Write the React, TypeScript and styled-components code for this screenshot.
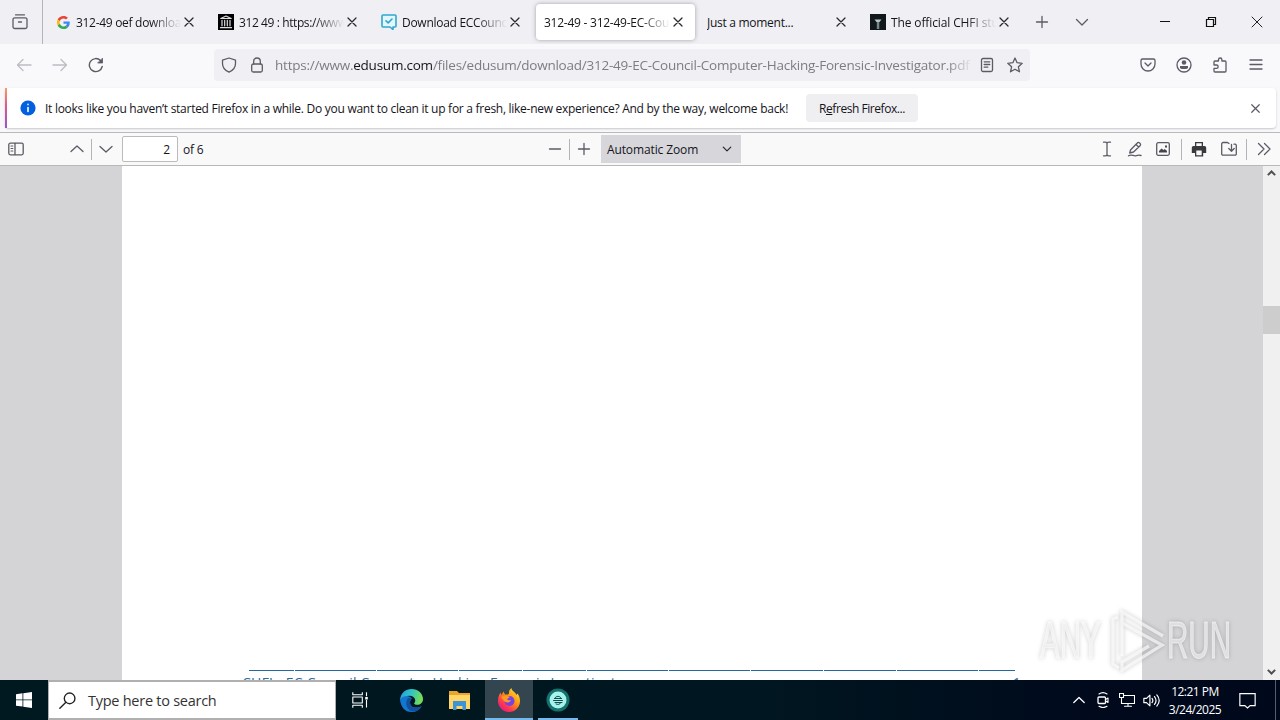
import React from "react";
import styled, { createGlobalStyle } from "styled-components";

const GlobalStyle = createGlobalStyle`
  * { box-sizing: border-box; }
  body { margin: 0; overflow: hidden; font-family: "Open Sans", "Noto Sans", sans-serif; font-size: 12px; color: #15141a; }
`;

const Screen = styled.div`
  position: relative;
  display: flex;
  flex-direction: column;
  width: 1280px;
  height: 720px;
  overflow: hidden;
  background: #f8f8fa;
`;

const Svg = styled.svg<{ $size: number; $color: string }>`
  display: block;
  flex: none;
  width: ${(p) => p.$size}px;
  height: ${(p) => p.$size}px;
  fill: none;
  stroke: ${(p) => p.$color};
  stroke-width: 1.3;
  stroke-linecap: round;
  stroke-linejoin: round;
`;

type IconProps = { children: React.ReactNode; size?: number; color?: string; box?: number };
const Icon = ({ children, size = 16, color = "#5b5b66", box = 16 }: IconProps) => (
  <Svg viewBox={`0 0 ${box} ${box}`} $size={size} $color={color}>{children}</Svg>
);

const Label = styled.span<{ $spacing?: number; $size?: number; $color?: string }>`
  display: block;
  white-space: nowrap;
  font-size: ${(p) => p.$size ?? 12}px;
  letter-spacing: ${(p) => p.$spacing ?? 0}px;
  color: ${(p) => p.$color ?? "#15141a"};
`;

const Cell = styled.div<{ $w: number; $start?: boolean }>`
  display: flex;
  flex: none;
  align-items: center;
  justify-content: ${(p) => (p.$start ? "flex-start" : "center")};
  width: ${(p) => p.$w}px;
  height: 100%;
`;

const Spacer = styled.div`flex: 1;`;

/* Tab strip */
const TabStrip = styled.div`
  display: flex;
  flex: none;
  align-items: center;
  height: 44px;
  background: #f0f0f4;
`;
const ViewButton = styled.div`
  display: flex;
  align-items: center;
  justify-content: center;
  width: 43px;
  height: 44px;
  padding-right: 2px;
  margin-right: 2px;
  border-right: 1px solid #b4b4ba;
`;
const Tab = styled.div<{ $active?: boolean }>`
  display: flex;
  flex: none;
  align-items: center;
  width: 159px;
  height: 36px;
  margin: 0 2px;
  padding: 0 9px 0 8px;
  border-radius: 4px;
  background: ${(p) => (p.$active ? "#fff" : "transparent")};
  box-shadow: ${(p) => (p.$active ? "0 0 4px rgba(90,90,105,.55)" : "none")};
`;
const TabTitle = styled.div<{ $fade?: boolean; $icon?: boolean }>`
  flex: 1;
  min-width: 0;
  overflow: hidden;
  margin-left: ${(p) => (p.$icon ? 5 : 0)}px;
  -webkit-mask-image: ${(p) => (p.$fade ? "linear-gradient(to right, #000 calc(100% - 30px), transparent)" : "none")};
`;

/* Navigation bar */
const NavBar = styled.div`
  display: flex;
  flex: none;
  align-items: center;
  height: 42px;
  padding: 0 6px;
  background: #f9f9fb;
`;
const UrlBar = styled.div`
  display: flex;
  align-items: center;
  width: 816px;
  height: 32px;
  margin: 0 100px 0 100px;
  padding: 0 1px;
  border-radius: 4px;
  background: #f0f0f4;
`;
const UrlText = styled.div`
  width: 698px;
  margin-left: 4px;
  overflow: hidden;
  white-space: nowrap;
  font-size: 13.5px;
  letter-spacing: -0.23px;
  color: #7c7c84;
  -webkit-mask-image: linear-gradient(to right, #000 calc(100% - 26px), transparent);
`;
const Domain = styled.span`color: #15141a;`;

/* Message bar */
const MessageArea = styled.div`
  flex: none;
  height: 47px;
  padding: 2px 4px 5px 5px;
  border-bottom: 1px solid #b9b9bb;
`;
const Message = styled.div`
  display: flex;
  align-items: center;
  height: 40px;
  padding: 0 12px 0 13px;
  border: 1px solid #e6e6e9;
  border-left: 2px solid;
  border-image: linear-gradient(#f7a35c, #e0558d 45%, #9059c8) 1;
  border-image-width: 0 0 0 2px;
  border-radius: 4px;
  background: #fff;
  box-shadow: 0 1px 2px rgba(58,57,68,.25);
`;
const RefreshButton = styled.div`
  display: flex;
  align-items: center;
  justify-content: center;
  width: 112px;
  height: 28px;
  border-radius: 4px;
  background: #efeff2;
`;

/* PDF toolbar */
const PdfBar = styled.div`
  display: flex;
  flex: none;
  align-items: center;
  height: 33px;
  background: #f9f9fa;
  border-bottom: 1px solid #b8b8b8;
`;
const Divider = styled.div`
  flex: none;
  width: 1px;
  height: 21px;
  background: #b4b4b8;
`;
const PageInput = styled.div`
  display: flex;
  align-items: center;
  justify-content: flex-end;
  width: 56px;
  height: 26px;
  margin: 0 5px 0 2px;
  padding: 1px 7px 0 0;
  border: 1px solid #bbbbbc;
  border-radius: 2px;
  background: #fff;
`;
const ZoomSelect = styled.div`
  display: flex;
  align-items: center;
  justify-content: space-between;
  width: 140px;
  height: 28px;
  padding: 0 8px 0 6px;
  background: #d7d7db;
`;

/* Document */
const Viewer = styled.div`
  display: flex;
  flex: none;
  height: 514px;
  padding-left: 122px;
  background: #d4d4d7;
`;
const Page = styled.div`
  display: flex;
  flex-direction: column;
  justify-content: flex-end;
  width: 1020px;
  overflow: hidden;
  background: #fff;
`;
const Footer = styled.div`
  height: 11px;
  margin: 0 121px 0 120px;
  overflow: hidden;
`;
const RuleRow = styled.div`
  display: flex;
  gap: 1px;
  padding: 0 3px 0 7px;
`;
const RuleSegment = styled.div<{ $w: number }>`
  flex: none;
  width: ${(p) => p.$w}px;
  height: 1px;
  margin-top: 1px;
  background: #2468a0;
`;
const FooterText = styled.div`
  display: flex;
  justify-content: space-between;
  padding-top: 4px;
  font-size: 14px;
  line-height: 16px;
  letter-spacing: 0.25px;
  white-space: nowrap;
  color: #2c6b96;
`;
const ScrollBar = styled.div`
  display: flex;
  flex-direction: column;
  align-items: center;
  width: 17px;
  margin-left: auto;
  padding: 1px 0 2px;
  background: #f0f0f0;
`;
const ScrollThumb = styled.div`
  width: 17px;
  height: 28px;
  margin-top: 126px;
  background: #cdcdcd;
`;

/* Taskbar */
const TaskBar = styled.div`
  display: flex;
  flex: none;
  height: 40px;
  background: linear-gradient(90deg, #001820, #001620 60%, #000a1c 85%, #00091b);
`;
const SearchBox = styled.div`
  display: flex;
  align-items: center;
  width: 288px;
  height: 40px;
  padding-left: 10px;
  border: 2px solid #b0b0b0;
  border-left-width: 1px;
  border-right-width: 1px;
  background: #fff;
`;
const SearchHint = styled.div`margin-left: 12px;`;
const Task = styled.div<{ $w: number; $active?: boolean; $open?: boolean }>`
  display: flex;
  align-items: center;
  justify-content: center;
  width: ${(p) => p.$w}px;
  height: 40px;
  padding-top: 2px;
  background: ${(p) => (p.$active ? "#33464f" : "transparent")};
  border-bottom: 2px solid ${(p) => (p.$active || p.$open ? "#76b9ed" : "transparent")};
`;
const Clock = styled.div`
  display: flex;
  flex-direction: column;
  align-items: center;
  justify-content: center;
  width: 58px;
  line-height: 18px;
  padding-top: 2px;
`;
const DesktopEdge = styled.div`
  width: 1px;
  height: 40px;
  margin: 0 4px 0 16px;
  background: #53606a;
`;
const Watermark = styled.div`
  position: absolute;
  left: 1040px;
  top: 606px;
  display: flex;
  align-items: center;
  width: 200px;
  height: 70px;
  color: rgba(255, 255, 255, 0.55);
  filter: drop-shadow(0 0 2px rgba(0, 0, 0, 0.32));
`;
const BrandWord = styled.span<{ $w: number }>`
  width: ${(p) => p.$w}px;
  white-space: nowrap;
  font-family: "Liberation Sans", sans-serif;
  font-size: 51px;
  line-height: 70px;
  -webkit-text-stroke: 1px rgba(255, 255, 255, 0.5);
  transform: scaleX(0.58);
  transform-origin: left center;
`;
const BrandMark = styled.svg`
  flex: none;
  width: 58px;
  height: 66px;
`;

const Close = ({ size = 16, color = "#2b2a33" }: { size?: number; color?: string }) => (
  <Icon size={size} color={color}><path d="M4 4l8 8M12 4l-8 8" /></Icon>
);
const Down = ({ color = "#5b5b66" }: { color?: string }) => <Icon color={color}><path d="M2.500 5.500L8 11l5.500-5.500" /></Icon>;

const GoogleIcon = () => (
  <Icon size={13} color="none" box={48}>
    <path fill="#EA4335" d="M24 9.500c3.500 0 6.700 1.200 9.200 3.600l6.900-6.900C35.900 2.400 30.500 0 24 0 14.600 0 6.500 5.400 2.600 13.200l8 6.200C12.400 13.700 17.700 9.500 24 9.500z" />
    <path fill="#4285F4" d="M47 24.600c0-1.600-.2-3.100-.4-4.600H24v9h12.900c-.6 3-2.200 5.500-4.800 7.200l7.700 6C44.400 38 47 31.800 47 24.600z" />
    <path fill="#FBBC05" d="M10.500 28.600a14.500 14.500 0 0 1 0-9.200l-8-6.200a24 24 0 0 0 0 21.600z" />
    <path fill="#34A853" d="M24 48c6.500 0 11.900-2.100 15.900-5.800l-7.700-6A14.400 14.400 0 0 1 10.500 28.600l-8 6.200C6.500 42.600 14.600 48 24 48z" />
  </Icon>
);
const ArchiveIcon = () => (
  <Icon color="#ddd"><rect width="16" height="16" fill="#000" stroke="none" /><path strokeWidth="1.200" d="M2.800 4.500L8 2l5.200 2.500zM2.500 13.700h11M4 6.300v5.500M6.700 6.300v5.500M9.300 6.300v5.500M12 6.300v5.500" /></Icon>
);
const CheckIcon = () => (
  <Icon color="#2ea9cd"><path strokeWidth="1.600" fill="#e3f6fb" d="M2 1h12a1 1 0 0 1 1 1v10a1 1 0 0 1-1 1h-2v2.500L9 13H2a1 1 0 0 1-1-1V2a1 1 0 0 1 1-1z" /><path strokeWidth="1.600" d="M5 6.800l2.200 2.100L11 5" /></Icon>
);
const PillarIcon = () => (
  <Icon color="none"><rect width="16" height="16" fill="#10181c" /><path fill="#b7c6c5" d="M4.500 5.500h7L9.500 8H6.500z" /><path fill="#74888a" d="M6.800 8h2.500v7H6.800z" /></Icon>
);

const tabs = [
  { icon: <GoogleIcon />, title: "312-49 oef downloa", fade: true, spacing: -0.3 },
  { icon: <ArchiveIcon />, title: "312 49 : https://www", fade: true, spacing: -0.4 },
  { icon: <CheckIcon />, title: "Download ECCounc", fade: true, spacing: -0.28 },
  { icon: null, title: "312-49 - 312-49-EC-Cou", fade: true, active: true, spacing: -0.25 },
  { icon: null, title: "Just a moment...", spacing: -0.28 },
  { icon: <PillarIcon />, title: "The official CHFI stu", fade: true, spacing: -0.12 },
];

export default function App() {
  return (
    <Screen>
      <GlobalStyle />
      <TabStrip>
        <ViewButton>
          <Icon><path d="M3.500.8h9" /><path d="M2.800 3.800h10.400a1.800 1.800 0 0 1 1.800 1.800v7.100a1.800 1.800 0 0 1-1.800 1.800H2.800A1.800 1.800 0 0 1 1 12.700V5.600a1.800 1.800 0 0 1 1.800-1.800zM6.500 8h3" /></Icon>
        </ViewButton>
        {tabs.map((t) => (
          <Tab key={t.title} $active={t.active}>
            {t.icon && <Cell $w={16}>{t.icon}</Cell>}
            <TabTitle $fade={t.fade} $icon={!!t.icon}><Label $spacing={t.spacing}>{t.title}</Label></TabTitle>
            <Close />
          </Tab>
        ))}
        <Cell $w={38}><Icon><path d="M8 2.500v11M2.500 8h11" /></Icon></Cell>
        <Cell $w={42}><Down /></Cell>
        <Spacer />
        <Cell $w={46}><Icon color="#111"><path strokeWidth="1" shapeRendering="crispEdges" d="M3 7.500h10" /></Icon></Cell>
        <Cell $w={46}><Icon color="#111"><path strokeWidth="1.200" strokeLinejoin="miter" d="M3.500 5.500h7v7h-7zM5.500 5.500v-2h7v7h-2" /></Icon></Cell>
        <Cell $w={46}><Icon color="#222"><path strokeWidth="1" d="M3 3l10 10M13 3L3 13" /></Icon></Cell>
      </TabStrip>

      <NavBar>
        <Cell $w={36}><Icon color="#bcbcc3"><path d="M15 8H1.500M7 2.500L1.500 8 7 13.500" /></Icon></Cell>
        <Cell $w={36}><Icon color="#bcbcc3"><path d="M1 8h13.500M9 2.500L14.500 8 9 13.500" /></Icon></Cell>
        <Cell $w={36}><Icon><path strokeWidth="1.400" d="M14.200 9.500A6.500 6.500 0 1 1 12.500 3.500L14 5" /><path fill="#5b5b66" d="M14.500 1.500V6H10z" strokeWidth=".8" /></Icon></Cell>
        <UrlBar>
          <Cell $w={28}><Icon><path d="M8 1l6.500 2.200v3.300c0 4-2.500 7-6.500 8.700-4-1.700-6.500-4.700-6.500-8.700V3.200z" /></Icon></Cell>
          <Cell $w={28}><Icon><rect x="2.700" y="7" width="10.600" height="8" rx="1.500" /><path d="M4.700 7V4.300a3.300 3.300 0 0 1 6.600 0V7" /></Icon></Cell>
          <UrlText>https://www.<Domain>edusum.com</Domain>/files/edusum/download/312-49-EC-Council-Computer-Hacking-Forensic-Investigator.pdf</UrlText>
          <Cell $w={28}><Icon><rect x="2.500" y="1.500" width="11" height="13" rx="1.500" /><path d="M5.200 4.800h5.600M5.200 7.500h5.600M5.200 10.200h3.600" /></Icon></Cell>
          <Cell $w={28}><Icon><path d="M8 1l2.100 4.700 5.100.6-3.800 3.500 1.100 5L8 12.200l-4.500 2.600 1.100-5L.8 6.300l5.100-.6z" /></Icon></Cell>
        </UrlBar>
        <Cell $w={36}><Icon><path d="M2.500 2h11A1.500 1.500 0 0 1 15 3.500V7A7 7 0 0 1 1 7V3.500A1.500 1.500 0 0 1 2.500 2zM5 6l3 3 3-3" /></Icon></Cell>
        <Cell $w={36}><Icon><circle cx="8" cy="8" r="7" /><circle cx="8" cy="5.500" r="2.300" fill="#5b5b66" stroke="none" /><path fill="#5b5b66" stroke="none" d="M4 9h8v1.200a1.800 1.800 0 0 1-1.800 1.800H5.800A1.800 1.800 0 0 1 4 10.200z" /></Icon></Cell>
        <Cell $w={36}><Icon><path d="M2 6.500V5a1 1 0 0 1 1-1h3.500V2.700a1.700 1.700 0 0 1 3.400 0V4H13a1 1 0 0 1 1 1v9a1 1 0 0 1-1 1H3a1 1 0 0 1-1-1v-2.700h2.500a1.600 1.600 0 0 0 0-3.300H2z" /></Icon></Cell>
        <Cell $w={36}><Icon><path d="M2 3h12M2 7.500h12M2 12h12" /></Icon></Cell>
      </NavBar>

      <MessageArea>
        <Message>
          <Cell $w={25} $start><Icon><circle cx="8" cy="8" r="7.600" fill="#0060df" stroke="none" /><path stroke="#fff" strokeWidth="1.600" d="M8 7.500v4M8 4.400v.2" /></Icon></Cell>
          <Cell $w={761} $start><Label $spacing={-0.275}>It looks like you haven’t started Firefox in a while. Do you want to clean it up for a fresh, like-new experience? And by the way, welcome back!</Label></Cell>
          <RefreshButton><Label $spacing={-0.45}>R<u>e</u>fresh Firefox...</Label></RefreshButton>
          <Spacer />
          <Close size={15} color="#5b5b66" />
        </Message>
      </MessageArea>

      <PdfBar>
        <Cell $w={32}><Icon><rect x=".8" y="2.200" width="14.400" height="11.600" rx="1.500" /><path d="M7 2.500v11" /><path strokeWidth="1.100" d="M3 5h1.800M3 7.500h1.800M3 10h1.800" /></Icon></Cell>
        <Cell $w={30} />
        <Cell $w={29}><Icon><path d="M2 10.500L8 5l6 5.500" /></Icon></Cell>
        <Divider />
        <Cell $w={28}><Icon><path d="M2 5.500L8 11l6-5.500" /></Icon></Cell>
        <PageInput><Label>2</Label></PageInput>
        <Cell $w={22} $start><Label $spacing={-0.2}>of 6</Label></Cell>
        <Cell $w={336} />
        <Cell $w={28}><Icon><path d="M2.500 8h11" /></Icon></Cell>
        <Divider />
        <Cell $w={27}><Icon><path d="M8 2.500v11M2.500 8h11" /></Icon></Cell>
        <Cell $w={4} />
        <ZoomSelect><Label $spacing={-0.12}>Automatic Zoom</Label><Icon size={12} color="#2b2a33"><path strokeWidth="1.700" d="M3 5.500l5 5 5-5" /></Icon></ZoomSelect>
        <Spacer />
        <Cell $w={28}><Icon><path d="M4.500 1.200h1.800Q8 1.200 8 2.500q0-1.300 1.700-1.300h1.800M8 2.500v11M4.500 14.800h1.800Q8 14.800 8 13.500q0 1.300 1.700 1.300h1.800" /></Icon></Cell>
        <Cell $w={28}><Icon><path d="M3.500 9l6.800-7a1.500 1.500 0 0 1 2.300 0l.5.500a1.500 1.500 0 0 1 0 2.200L6.500 11l-3.800 1zM9 3.500L11.700 6M1.500 14.800c3-2 5 .5 7 0s3-1 5.500-.3" /></Icon></Cell>
        <Cell $w={28}><Icon><rect x="1.700" y="1.700" width="12.600" height="12.600" rx="1.500" /><path fill="#45454e" stroke="none" d="M4 11.500V10l2.500-2.500L8.500 9l1.300-1L12 10v1.500zM10 4.500h2v2h-2z" /></Icon></Cell>
        <Cell $w={4} />
        <Divider />
        <Cell $w={34}><Icon><path stroke="none" fill="#38383d" d="M4 1h8v4h1.500A1.700 1.700 0 0 1 15.200 6.700V12h-3v3.500H4V12H.8V6.700A1.700 1.700 0 0 1 2.500 5H4z" /><path stroke="none" fill="#f9f9fa" d="M5.300 2.300h5.400V5H5.300zM5.300 9.500h5.400v4.700H5.300z" /></Icon></Cell>
        <Cell $w={26}><Icon><path d="M8 2.500L6.500 1.500H2A1.300 1.300 0 0 0 .7 2.800v10A1.300 1.300 0 0 0 2 14.200h12a1.300 1.300 0 0 0 1.300-1.400V4.500A1.300 1.300 0 0 0 14 3.200h-1M10.500 3.500V10M7.800 7.500l2.700 2.700 2.700-2.700" /></Icon></Cell>
        <Cell $w={4} />
        <Divider />
        <Cell $w={33}><Icon><path d="M2.500 2.500L8 8l-5.500 5.500M8.500 2.500L14 8l-5.500 5.500" /></Icon></Cell>
      </PdfBar>

      <Viewer>
        <Page>
          <Footer>
            <RuleRow>{[45, 81, 81, 63, 63, 81, 81, 72, 72, 81, 36].map((w, i) => <RuleSegment key={i} $w={w} />)}</RuleRow>
            <FooterText><span>CHFI - EC Council Computer Hacking Forensic Investigator</span><span>1</span></FooterText>
          </Footer>
        </Page>
        <ScrollBar>
          <Icon size={13} color="#505050"><path strokeWidth="2.500" strokeLinecap="butt" strokeLinejoin="miter" d="M3.500 10L8 5.500l4.500 4.500" /></Icon>
          <ScrollThumb />
          <Spacer />
          <Icon size={13} color="#505050"><path strokeWidth="2.500" strokeLinecap="butt" strokeLinejoin="miter" d="M3.500 6L8 10.500 12.500 6" /></Icon>
        </ScrollBar>
      </Viewer>

      <TaskBar>
        <Cell $w={48}><Icon color="none"><path fill="#fff" d="M0 2.200l6.500-.9v6.200H0zM7.300 1.200L16 0v7.500H7.300zM0 8.300h6.500v6.300L0 13.800zM7.300 8.300H16V16l-8.700-1.200z" /></Icon></Cell>
        <SearchBox>
          <Icon size={17} color="#222"><circle cx="10" cy="6" r="5" /><path d="M6.500 9.700L.8 15.400" /></Icon>
          <SearchHint><Label $size={14.5} $spacing={-0.26} $color="#333">Type here to search</Label></SearchHint>
        </SearchBox>
        <Task $w={48}><Icon color="#fff"><path strokeWidth="1.100" strokeLinecap="square" d="M.8.800v2h9.500v-2M.8 15.200v-2h9.500v2M.8 5h9.500v6H.8zM14.500.8v3M14.500 8.500v6.500" /><path fill="#fff" stroke="none" d="M13.200 5h2.600v2.500h-2.600z" /></Icon></Task>
        <Task $w={54}>
          <Icon size={25} color="none" box={26}>
            <defs><linearGradient id="edgeWave" x1="0" y1="0" x2="1" y2=".2"><stop offset="0" stopColor="#249ee0" /><stop offset=".5" stopColor="#2fc2c8" /><stop offset="1" stopColor="#75dc59" /></linearGradient></defs>
            <path fill="#1477cf" d="M1 12c1 8 5 13 12 13 5 0 8-2 10.500-6-6 3-12 1-12-4 0-2 1-3 2-4C10 7 3 7 1 12z" />
            <path fill="#12509d" d="M9 11c-4 5 0 14 7 13.500 3-.5 6-2.500 7.500-5.500-6 3-12 1-12-4 0-2 1-3 1.500-4-1-1-3-1-4 0z" />
            <path fill="url(#edgeWave)" d="M1 12C2 5 7 1 13 1c7 0 12 5 12 10.500 0 4-3 6-6 6-2 0-4-1-3-2 2-2 1-7-5-7.500C7 8 3 9 1 12z" />
          </Icon>
        </Task>
        <Task $w={43}>
          <Icon size={23} color="none" box={23}><path fill="#e9a52c" d="M1 2h8l2 2h11v5H1z" /><path fill="#ffd568" d="M1 6h21v14H1z" /><path fill="#3d94d4" d="M5 12h13v9h-3.500v-4h-6v4H5z" /></Icon>
        </Task>
        <Cell $w={4} />
        <Task $w={48} $active>
          <Icon size={24} color="none" box={24}>
            <defs><linearGradient id="flame" x1="1" y1="0" x2=".2" y2="1"><stop offset="0" stopColor="#fff14a" /><stop offset=".45" stopColor="#ff980e" /><stop offset=".75" stopColor="#ff3b4f" /><stop offset="1" stopColor="#e31587" /></linearGradient></defs>
            <path fill="url(#flame)" d="M1 13C1 9 2 7 3.500 4.500L4.500 7l2-3.500L8 6.500c2 0 4 .5 4-1.500s.5-3.500 2.500-5c0 3 4 4 5 7l1-1.500c1.500 2 2.500 4 2.500 7.500a11 11 0 0 1-22 0z" />
            <circle cx="12.500" cy="13" r="5" fill="#7543e5" /><path fill="#ff9a1f" d="M4 9c3-2 6-2 9 0l-3 2c1 2 3 1 4 1-1 3-5 3-7 1z" />
          </Icon>
        </Task>
        <Cell $w={5} />
        <Task $w={40} $open>
          <Icon size={24} color="none" box={24}><circle cx="12" cy="12" r="11.500" fill="#15716e" /><circle cx="12" cy="12" r="8.500" fill="#a5f3eb" /><path stroke="#174b50" strokeWidth="1" d="M8.500 10.500c2-3 5-3 7 0M8.500 10.500h7M7.500 12.500h9M9 14.500h7M10 16c2 1 4 .5 5-1.500" /></Icon>
        </Task>
        <Spacer />
        <Cell $w={24}><Icon color="#fff"><path d="M2.800 10.500L8 5.500l5.200 5" /></Icon></Cell>
        <Cell $w={24}><Icon color="#fff"><rect x="3" y="5" width="7.500" height="6.500" rx="1" /><path d="M10.500 7.500l2.500-1.500v4.500L10.500 9M4 2Q8-.8 12 2M4 14.300q4 2.500 8 0" strokeWidth="1.100" /></Icon></Cell>
        <Cell $w={24}><Icon color="#fff"><path strokeWidth="1.100" strokeLinejoin="miter" d="M5 3.500h10.500v8H2.500V6M9 11.500V14M5.500 14.200h7M.5 1.500h4v4h-4zM2.500 5.500v2" /></Icon></Cell>
        <Cell $w={24}><Icon size={17} color="#fff"><path strokeWidth="1.100" d="M.8 6h2.500L6.500 3v10L3.300 10H.8zM8.500 6q1.500 2 0 4M10.800 4.300q3 3.700 0 7.400M13 2.800q4.500 5.200 0 10.400" /></Icon></Cell>
        <Cell $w={3} />
        <Clock><Label $color="#fff" $spacing={-0.5}>12:21 PM</Label><Label $color="#fff" $spacing={-0.5}>3/24/2025</Label></Clock>
        <Cell $w={11} />
        <Cell $w={24}><Icon size={17} color="#fff"><path strokeWidth="1.100" strokeLinejoin="miter" d="M.8 1.500h14.400v11.300H10.500L8 15l-2.500-2.200H.8z" /></Icon></Cell>
        <DesktopEdge />
      </TaskBar>

      <Watermark>
        <BrandWord $w={69}>ANY</BrandWord>
        <BrandMark viewBox="0 0 58 66" fill="none" stroke="rgba(255,255,255,.65)" strokeWidth="3.200">
          <path d="M13 48V4L54 28M13 15L53 37 13 62V54L40 38M9 9L4 11V56L10 60" />
        </BrandMark>
        <BrandWord $w={70}>RUN</BrandWord>
      </Watermark>
    </Screen>
  );
}
